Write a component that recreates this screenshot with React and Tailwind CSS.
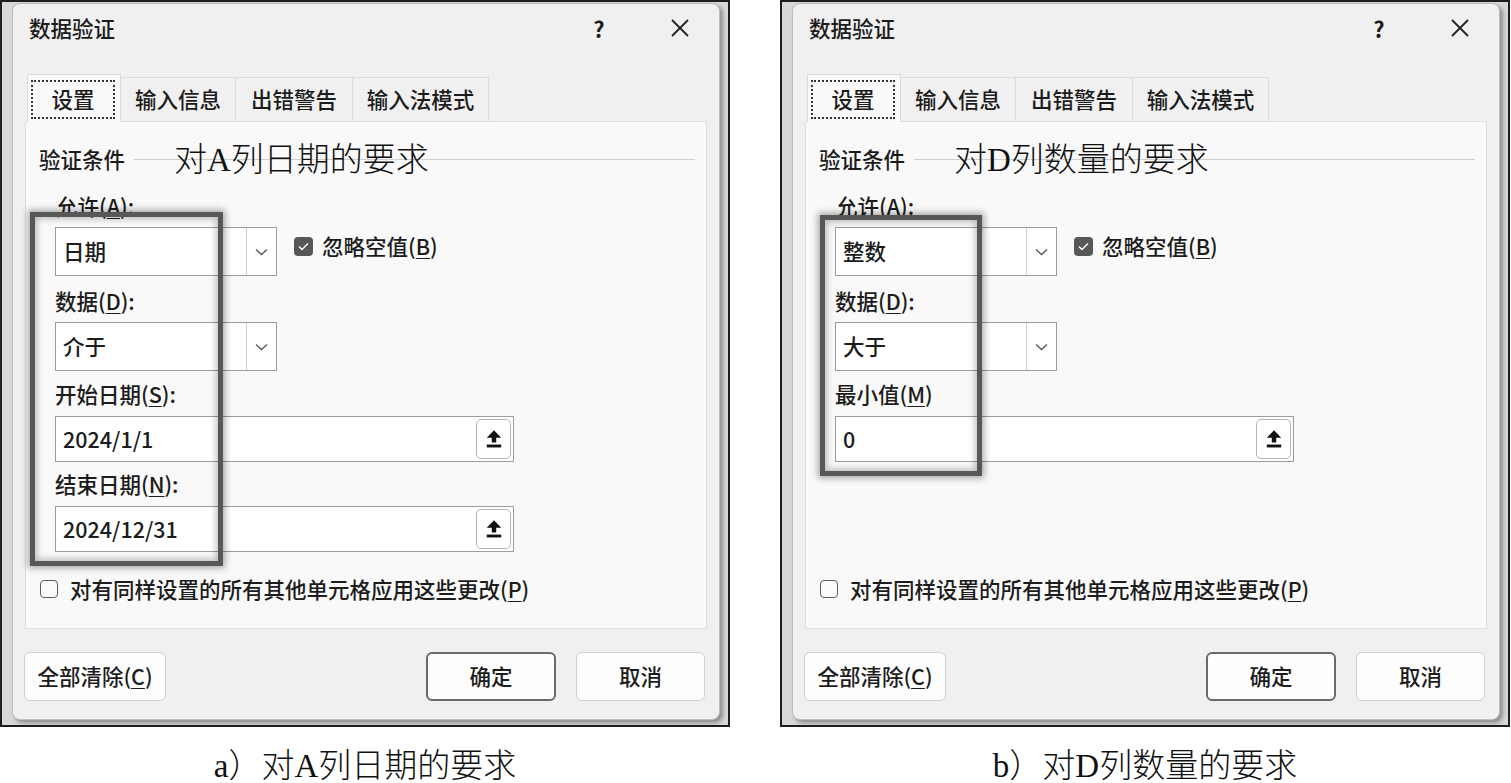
import React from "react";

const UI = "font-['Noto_Sans_CJK_SC','Noto_Sans',sans-serif]";
const SERIF = "font-['Liberation_Serif','Noto_Sans_CJK_SC',serif]";

function U({ children }) {
  return <span className="underline decoration-1 underline-offset-[3px]">{children}</span>;
}

function Chevron() {
  return (
    <svg width="13" height="8" viewBox="0 0 13 8">
      <polyline points="1,1.5 6.5,6.5 12,1.5" fill="none" stroke="#555" strokeWidth="1.3" />
    </svg>
  );
}

function UploadIcon() {
  return (
    <svg width="18" height="20" viewBox="0 0 16 18">
      <path d="M8 1.2 L14.5 7.8 L10 7.8 L10 12.2 L6 12.2 L6 7.8 L1.5 7.8 Z" fill="#111" />
      <rect x="1.5" y="14" width="13" height="2.6" fill="#111" />
    </svg>
  );
}

function Combo({ value }) {
  return (
    <div className="flex h-[49px] w-[222px] border border-[#9c9c9c] bg-white">
      <div className="flex flex-1 items-center pl-[7px]">{value}</div>
      <div className="flex w-[30px] items-center justify-center border-l border-[#cfcfcf]">
        <Chevron />
      </div>
    </div>
  );
}

function RefInput({ value }) {
  return (
    <div className="flex h-[46px] w-[459px] items-center justify-between border border-[#9c9c9c] bg-white pl-[7px] pr-[2px]">
      <span>{value}</span>
      <div className="flex h-[40px] w-[35px] items-center justify-center rounded-[5px] border border-[#b4b4b4] bg-white">
        <UploadIcon />
      </div>
    </div>
  );
}

function Label({ children, mt }) {
  return <div className={`flex h-[28px] items-center ${mt}`}>{children}</div>;
}

function Dialog({ annotation, caption, allow, data, fields, box }) {
  return (
    <div className="flex flex-col items-center">
      <div className="relative h-[730px] w-[730px] border-2 border-[#1e1e1e] bg-[#d8d8d8]">
        <div className={`ml-[10px] mt-[1px] flex h-[717px] w-[708px] flex-col rounded-[8px] border border-[#bdbdbd] bg-[#f0f0f0] text-[21.5px] font-medium text-[#1c1c1c] shadow-[3px_3px_4px_rgba(0,0,0,0.35)] ${UI}`}>
          {/* title bar */}
          <div className="flex h-[48px] items-center justify-between pl-[16px] pr-[30px]">
            <span>数据验证</span>
            <div className="flex items-center">
              <span className="w-[24px] text-center text-[22px] font-bold">?</span>
              <svg className="ml-[60px]" width="18" height="18" viewBox="0 0 18 18">
                <path d="M1 1 L17 17 M17 1 L1 17" stroke="#222" strokeWidth="1.8" />
              </svg>
            </div>
          </div>
          {/* tabs */}
          <div className="relative z-10 -mb-px ml-[14px] mt-[22px] flex h-[48px] items-end">
            <div className="flex h-[48px] w-[94px] items-center border border-b-0 border-[#dcdcdc] bg-[#f9f9f9] pt-[2px]">
              <div className="ml-[3px] flex h-[39px] w-[84px] items-center justify-center border-2 border-dotted border-[#333]">
                设置
              </div>
            </div>
            <div className="flex h-[45px] w-[115px] items-center justify-center border border-l-0 border-[#dcdcdc] bg-[#f0f0f0]">输入信息</div>
            <div className="flex h-[45px] w-[117px] items-center justify-center border border-l-0 border-[#dcdcdc] bg-[#f0f0f0]">出错警告</div>
            <div className="flex h-[45px] w-[136px] items-center justify-center border border-l-0 border-[#dcdcdc] bg-[#f0f0f0]">输入法模式</div>
          </div>
          {/* content panel */}
          <div className="relative ml-[12px] flex h-[508px] w-[682px] flex-col border border-[#e0e0e0] bg-[#f9f9f9] pl-[29px]">
            <div className="-ml-[16px] mt-[23px] flex h-[28px] items-center pr-[11px]">
              <span>验证条件</span>
              <div className="ml-[9px] h-px flex-1 bg-[#cfcfcf]" />
            </div>
            <div className={`absolute left-[148px] top-[22px] text-[33px] font-light leading-[33px] text-[#111] ${SERIF}`}>
              {annotation}
            </div>
            <Label mt="mt-[19px]">
              <span className="pl-[1px]">允许(<U>A</U>):</span>
            </Label>
            <div className="mt-[7px] flex items-center">
              <Combo value={allow} />
              <div className="mb-[10px] ml-[17px] flex items-center">
                <div className="flex h-[19px] w-[19px] items-center justify-center rounded-[4px] bg-[#575757]">
                  <svg width="11" height="9" viewBox="0 0 11 9">
                    <polyline points="1,4.5 4,7.5 10,1.5" fill="none" stroke="#fff" strokeWidth="1.4" />
                  </svg>
                </div>
                <span className="ml-[9px]">忽略空值(<U>B</U>)</span>
              </div>
            </div>
            <Label mt="mt-[11px]">
              <span>数据(<U>D</U>):</span>
            </Label>
            <div className="mt-[7px]">
              <Combo value={data} />
            </div>
            {fields.map((f, i) => (
              <React.Fragment key={i}>
                <Label mt={i === 0 ? "mt-[9px]" : "mt-[8px]"}>
                  <span>
                    {f.pre}
                    <U>{f.k}</U>
                    {f.post}
                  </span>
                </Label>
                <div className="mt-[8px]">
                  <RefInput value={f.value} />
                </div>
              </React.Fragment>
            ))}
            <div className="-ml-[15px] mb-[24px] mt-auto flex h-[30px] items-center">
              <div className="h-[18px] w-[18px] rounded-[4px] border-[1.5px] border-[#5a5a5a] bg-[#fbfbfb]" />
              <span className="ml-[12px]">
                对有同样设置的所有其他单元格应用这些更改(<U>P</U>)
              </span>
            </div>
          </div>
          {/* buttons */}
          <div className="ml-[11px] mr-[14px] mt-[23px] flex h-[49px]">
            <div className="flex w-[142px] items-center justify-center rounded-[6px] border border-[#d0d0d0] bg-[#fdfdfd]">
              全部清除(<U>C</U>)
            </div>
            <div className="ml-auto flex w-[130px] items-center justify-center rounded-[6px] border-2 border-[#6a6a6a] bg-[#fdfdfd]">
              确定
            </div>
            <div className="ml-[20px] flex w-[129px] items-center justify-center rounded-[6px] border border-[#d0d0d0] bg-[#fdfdfd]">
              取消
            </div>
          </div>
        </div>
        <div
          className={`absolute border-[5px] border-[#575757] shadow-[0_0_7px_2px_rgba(0,0,0,0.35),inset_0_0_6px_2px_rgba(0,0,0,0.25)] ${box}`}
        />
      </div>
      <div className={`mt-[23px] text-[33px] font-light leading-[33px] text-[#111] ${SERIF}`}>{caption}</div>
    </div>
  );
}

export default function App() {
  return (
    <div className="flex h-[783px] w-[1511px] gap-[50px] overflow-hidden bg-white">
      <Dialog
        annotation="对A列日期的要求"
        caption="a）对A列日期的要求"
        allow="日期"
        data="介于"
        fields={[
          { pre: "开始日期(", k: "S", post: "):", value: "2024/1/1" },
          { pre: "结束日期(", k: "N", post: "):", value: "2024/12/31" },
        ]}
        box="left-[28px] top-[210px] h-[354px] w-[193px]"
      />
      <Dialog
        annotation="对D列数量的要求"
        caption="b）对D列数量的要求"
        allow="整数"
        data="大于"
        fields={[{ pre: "最小值(", k: "M", post: ")", value: "0" }]}
        box="left-[38px] top-[213px] h-[261px] w-[162px]"
      />
    </div>
  );
}
